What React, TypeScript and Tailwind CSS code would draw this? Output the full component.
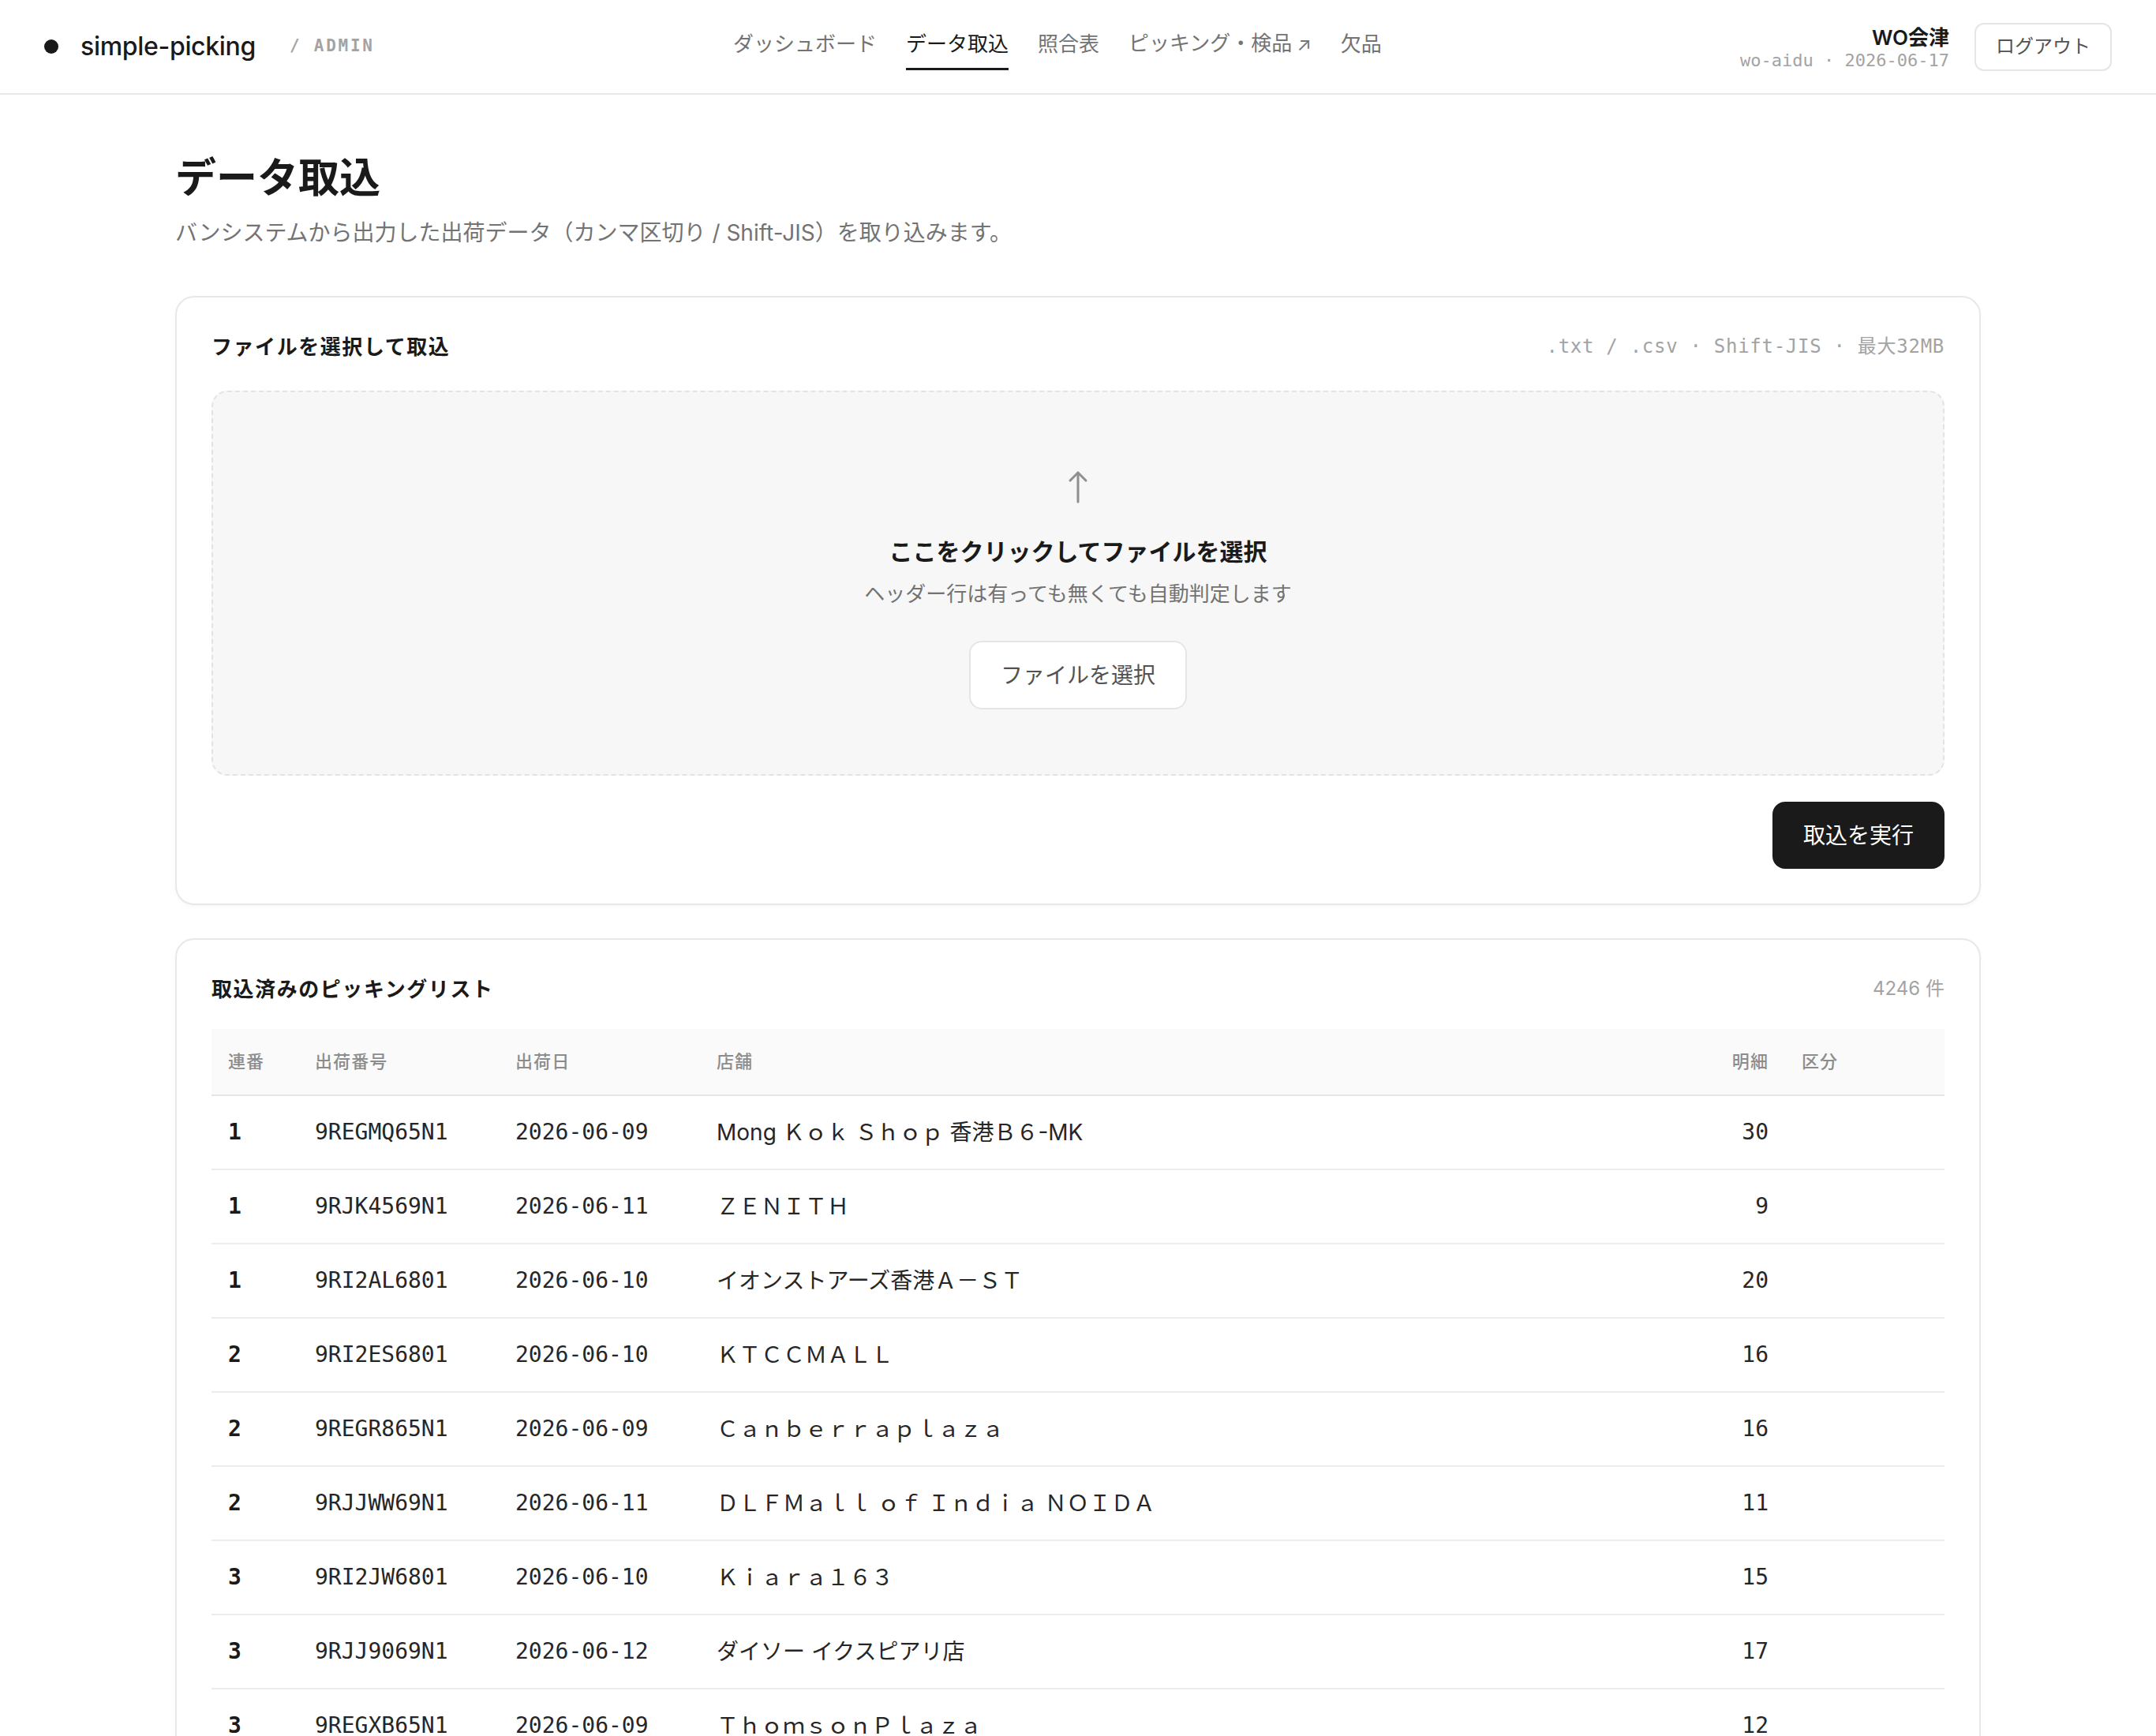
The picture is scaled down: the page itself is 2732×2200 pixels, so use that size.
import React from 'react';

const sans = "font-['Inter','Noto_Sans_CJK_JP',sans-serif]";
const mono = "font-['DejaVu_Sans_Mono','Noto_Sans_CJK_JP',monospace]";

type Row = { seq: number; no: string; date: string; store: string; lines: number };

const rows: Row[] = [
  { seq: 1, no: '9REGMQ65N1', date: '2026-06-09', store: 'Mong Ｋｏｋ Ｓｈｏｐ 香港Ｂ６-MK', lines: 30 },
  { seq: 1, no: '9RJK4569N1', date: '2026-06-11', store: 'ＺＥＮＩＴＨ', lines: 9 },
  { seq: 1, no: '9RI2AL6801', date: '2026-06-10', store: 'イオンストアーズ香港Ａ－ＳＴ', lines: 20 },
  { seq: 2, no: '9RI2ES6801', date: '2026-06-10', store: 'ＫＴＣＣＭＡＬＬ', lines: 16 },
  { seq: 2, no: '9REGR865N1', date: '2026-06-09', store: 'Ｃａｎｂｅｒｒａｐｌａｚａ', lines: 16 },
  { seq: 2, no: '9RJJWW69N1', date: '2026-06-11', store: 'ＤＬＦＭａｌｌ ｏｆ Ｉｎｄｉａ ＮＯＩＤＡ', lines: 11 },
  { seq: 3, no: '9RI2JW6801', date: '2026-06-10', store: 'Ｋｉａｒａ１６３', lines: 15 },
  { seq: 3, no: '9RJJ9069N1', date: '2026-06-12', store: 'ダイソー イクスピアリ店', lines: 17 },
  { seq: 3, no: '9REGXB65N1', date: '2026-06-09', store: 'ＴｈｏｍｓｏｎＰｌａｚａ', lines: 12 },
];

const navItems = [
  { label: 'ダッシュボード' },
  { label: 'データ取込', active: true },
  { label: '照合表' },
  { label: 'ピッキング・検品', external: true },
  { label: '欠品' },
];

function Header() {
  return (
    <header className="h-[120px] border-b-2 border-[#e8e8e8] px-[56px] flex items-center justify-between">
      <div className="flex items-center">
        <span className="w-[18px] h-[18px] rounded-full bg-[#1a1a1a]" />
        <span className="ml-[28px] text-[32px] font-medium tracking-[-0.01em] text-[#1a1a1a] leading-[40px]">
          simple-picking
        </span>
        <span className={`${mono} ml-[43px] text-[21px] font-bold tracking-[0.13em] text-[#a3a3a3]`}>/ ADMIN</span>
      </div>

      <nav className="flex items-center gap-[37px] pt-[6px]">
        {navItems.map((item) => (
          <a
            key={item.label}
            className={
              item.active
                ? 'pb-[10px] border-b-[3px] border-[#1a1a1a] text-[26px] leading-[40px] text-[#1a1a1a]'
                : 'pb-[10px] border-b-[3px] border-transparent text-[26px] leading-[40px] text-[#737373]'
            }
          >
            {item.label}
            {item.external && <span className="ml-[6px] text-[24px]">↗</span>}
          </a>
        ))}
      </nav>

      <div className="flex items-center gap-[32px]">
        <div className="flex flex-col items-end">
          <span className="pt-[2px] text-[26px] font-semibold leading-[34px] text-[#1a1a1a]">WO会津</span>
          <span className={`${mono} text-[22px] leading-[24px] text-[#a3a3a3]`}>wo-aidu · 2026-06-17</span>
        </div>
        <button className="h-[61px] px-[25px] rounded-[12px] border-2 border-[#e5e5e5] bg-white text-[24px] text-[#525252]">
          ログアウト
        </button>
      </div>
    </header>
  );
}

function CardTitle({ title, right }: { title: string; right: React.ReactNode }) {
  return (
    <div className="h-[36px] flex items-center justify-between">
      <h2 className="text-[26px] font-semibold tracking-[0.06em] text-[#1a1a1a]">{title}</h2>
      {right}
    </div>
  );
}

function UploadCard() {
  return (
    <section className="rounded-[24px] border-2 border-[#e8e8e8] bg-white p-[44px] shadow-[0_2px_6px_rgba(0,0,0,0.03)]">
      <CardTitle
        title="ファイルを選択して取込"
        right={
          <span className={`${mono} text-[24px] tracking-[0.03em] text-[#a3a3a3]`}>.txt / .csv · Shift-JIS · 最大32MB</span>
        }
      />

      <div className="mt-[38px] h-[488px] rounded-[20px] border-2 border-dashed border-[#e3e3e3] bg-[#f7f7f7] pt-[99px] flex flex-col items-center">
        <svg width="26" height="42" viewBox="0 0 26 42" fill="none" stroke="#8f8f8f" strokeWidth="3" strokeLinecap="round" strokeLinejoin="round">
          <path d="M13 40V3" />
          <path d="M3 13 13 3l10 10" />
        </svg>
        <p className="mt-[41px] text-[30px] leading-[40px] font-bold text-[#1a1a1a]">ここをクリックしてファイルを選択</p>
        <p className="mt-[16px] text-[26px] leading-[36px] text-[#737373]">ヘッダー行は有っても無くても自動判定します</p>
        <button className="mt-[41px] h-[87px] px-[38px] rounded-[16px] border-2 border-[#e5e5e5] bg-white text-[28px] text-[#525252]">
          ファイルを選択
        </button>
      </div>

      <div className="mt-[33px] flex justify-end">
        <button className="h-[85px] px-[39px] rounded-[16px] bg-[#1a1a1a] text-[28px] text-white">取込を実行</button>
      </div>
    </section>
  );
}

function ListCard() {
  return (
    <section className="mt-[42px] rounded-[24px] border-2 border-[#e8e8e8] bg-white p-[44px] shadow-[0_2px_6px_rgba(0,0,0,0.03)]">
      <CardTitle title="取込済みのピッキングリスト" right={<span className="text-[24px] text-[#a3a3a3]">4246 件</span>} />

      <table className="mt-[33px] w-full table-fixed">
        <colgroup>
          <col className="w-[110px]" />
          <col className="w-[254px]" />
          <col className="w-[255px]" />
          <col />
          <col className="w-[140px]" />
          <col className="w-[202px]" />
        </colgroup>
        <thead>
          <tr className="h-[84px] bg-[#fafafa] border-b-2 border-[#e5e5e5] text-[22px] font-medium tracking-[0.05em] text-[#8c8c8c]">
            <th className="px-[21px] text-left font-medium">連番</th>
            <th className="px-[21px] text-left font-medium">出荷番号</th>
            <th className="px-[21px] text-left font-medium">出荷日</th>
            <th className="px-[21px] text-left font-medium">店舗</th>
            <th className="px-[21px] text-right font-medium">明細</th>
            <th className="px-[21px] text-left font-medium">区分</th>
          </tr>
        </thead>
        <tbody>
          {rows.map((r) => (
            <tr key={r.no} className="h-[94px] border-b-2 border-[#ececec] text-[28px] text-[#262626]">
              <td className={`${mono} px-[21px] font-bold text-[#1a1a1a]`}>{r.seq}</td>
              <td className={`${mono} px-[21px]`}>{r.no}</td>
              <td className={`${mono} px-[21px]`}>{r.date}</td>
              <td className="px-[21px] whitespace-nowrap">{r.store}</td>
              <td className={`${mono} px-[21px] text-right`}>{r.lines}</td>
              <td className="px-[21px]" />
            </tr>
          ))}
        </tbody>
      </table>
    </section>
  );
}

export default function App() {
  return (
    <div className={`${sans} min-h-screen bg-white text-[#1a1a1a]`}>
      <Header />
      <main className="max-w-[2400px] mx-auto px-[56px] pt-[74px] pb-[80px]">
        <h1 className="text-[52px] leading-[64px] font-bold text-[#1a1a1a]">データ取込</h1>
        <p className="mt-[17px] text-[28px] leading-[40px] text-[#737373]">
          バンシステムから出力した出荷データ（カンマ区切り / Shift-JIS）を取り込みます。
        </p>
        <div className="mt-[60px]">
          <UploadCard />
          <ListCard />
        </div>
      </main>
    </div>
  );
}
